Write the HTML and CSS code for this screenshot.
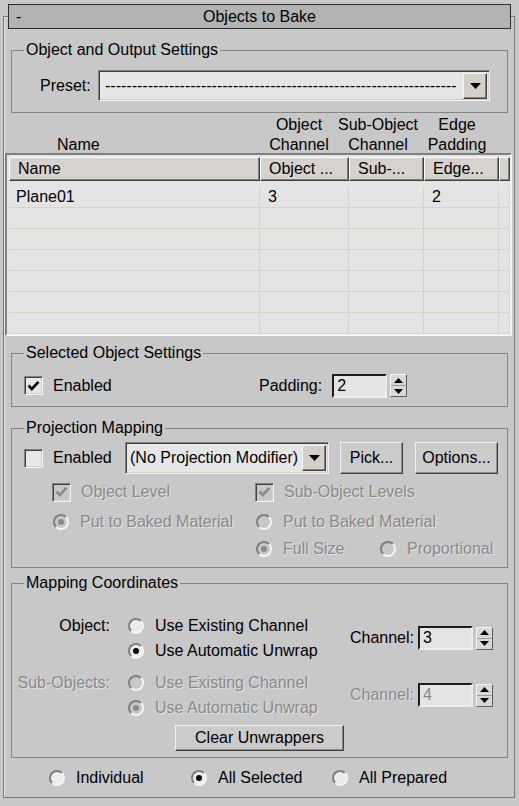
FILE: index.html
```html
<!DOCTYPE html>
<html>
<head>
<meta charset="utf-8">
<link rel="stylesheet" href="styles.css">
</head>
<body>
<div class="rollout">
  <div class="title"><span class="minus">-</span><span class="title-text">Objects to Bake</span><span></span></div>

  <fieldset class="group g1">
    <legend>Object and Output Settings</legend>
    <div class="preset-row">
      <span class="preset-label">Preset:</span>
      <div class="combo preset-combo">
        <span class="val">------------------------------------------------------------------</span>
        <span class="arrow"><svg width="11" height="6" viewBox="0 0 11 6"><path d="M0 0H11L5.5 6Z" fill="#000"/></svg></span>
      </div>
    </div>
  </fieldset>

  <div class="col-labels">
    <div class="cl cl-name"><br>Name</div>
    <div class="cl">Object<br>Channel</div>
    <div class="cl">Sub-Object<br>Channel</div>
    <div class="cl">Edge<br>Padding</div>
  </div>

  <div class="list">
    <div class="list-head">
      <div class="hcell">Name</div>
      <div class="hcell">Object ...</div>
      <div class="hcell">Sub-...</div>
      <div class="hcell">Edge...</div>
      <div class="hcell"></div>
    </div>
    <div class="list-body">
      <div class="lrow"><div class="cell">Plane01</div><div class="cell">3</div><div class="cell"></div><div class="cell">2</div><div class="cell"></div></div>
      <div class="lrow"><div class="cell"></div><div class="cell"></div><div class="cell"></div><div class="cell"></div><div class="cell"></div></div>
      <div class="lrow"><div class="cell"></div><div class="cell"></div><div class="cell"></div><div class="cell"></div><div class="cell"></div></div>
      <div class="lrow"><div class="cell"></div><div class="cell"></div><div class="cell"></div><div class="cell"></div><div class="cell"></div></div>
      <div class="lrow"><div class="cell"></div><div class="cell"></div><div class="cell"></div><div class="cell"></div><div class="cell"></div></div>
      <div class="lrow"><div class="cell"></div><div class="cell"></div><div class="cell"></div><div class="cell"></div><div class="cell"></div></div>
      <div class="lrow"><div class="cell"></div><div class="cell"></div><div class="cell"></div><div class="cell"></div><div class="cell"></div></div>
    </div>
  </div>

  <fieldset class="group g2">
    <legend>Selected Object Settings</legend>
    <div class="sel-row">
      <div class="opt sel-enabled"><span class="check on"><svg width="13" height="12" viewBox="0 0 13 12"><path d="M1.5 5.5L4.8 9L11.5 1.8" fill="none" stroke="#000" stroke-width="2.6"/></svg></span>Enabled</div>
      <span class="lbl">Padding:</span>
      <div class="spin">
        <span class="field">2</span>
        <span class="arrows"><svg width="9" height="5" viewBox="0 0 9 5"><path d="M0 5H9L4.5 0Z" fill="#000"/></svg><span class="sep"></span><svg width="9" height="5" viewBox="0 0 9 5"><path d="M0 0H9L4.5 5Z" fill="#000"/></svg></span>
      </div>
    </div>
  </fieldset>

  <fieldset class="group g3">
    <legend>Projection Mapping</legend>
    <div class="proj-row1">
      <div class="opt proj-enabled"><span class="check"></span>Enabled</div>
      <div class="combo proj-combo">
        <span class="val">(No Projection Modifier)</span>
        <span class="arrow"><svg width="11" height="6" viewBox="0 0 11 6"><path d="M0 0H11L5.5 6Z" fill="#000"/></svg></span>
      </div>
      <span class="btn pick">Pick...</span>
      <span class="btn options">Options...</span>
    </div>
    <div class="proj-row row2">
      <div class="opt dis col-left"><span class="check on dis"><svg width="13" height="12" viewBox="0 0 13 12"><path d="M1.5 5.5L4.8 9L11.5 1.8" fill="none" stroke="#8a8a8a" stroke-width="2.6"/></svg></span>Object Level</div>
      <div class="opt dis"><span class="check on dis"><svg width="13" height="12" viewBox="0 0 13 12"><path d="M1.5 5.5L4.8 9L11.5 1.8" fill="none" stroke="#8a8a8a" stroke-width="2.6"/></svg></span>Sub-Object Levels</div>
    </div>
    <div class="proj-row row3">
      <div class="opt dis col-left"><span class="radio on dis"></span>Put to Baked Material</div>
      <div class="opt dis"><span class="radio dis"></span>Put to Baked Material</div>
    </div>
    <div class="proj-row row4">
      <div class="opt dis col-fullsize"><span class="radio on dis"></span>Full Size</div>
      <div class="opt dis"><span class="radio dis"></span>Proportional</div>
    </div>
  </fieldset>

  <fieldset class="group g4">
    <legend>Mapping Coordinates</legend>
    <div class="map-block obj-block">
      <span class="map-label">Object:</span>
      <div class="map-radios">
        <div class="opt mrow"><span class="radio"></span>Use Existing Channel</div>
        <div class="opt mrow"><span class="radio on"></span>Use Automatic Unwrap</div>
      </div>
      <div class="chan">
        <span class="lbl">Channel:</span>
        <div class="spin">
          <span class="field">3</span>
          <span class="arrows"><svg width="9" height="5" viewBox="0 0 9 5"><path d="M0 5H9L4.5 0Z" fill="#000"/></svg><span class="sep"></span><svg width="9" height="5" viewBox="0 0 9 5"><path d="M0 0H9L4.5 5Z" fill="#000"/></svg></span>
        </div>
      </div>
    </div>
    <div class="map-block sub-block">
      <span class="map-label dis">Sub-Objects:</span>
      <div class="map-radios">
        <div class="opt mrow dis"><span class="radio dis"></span>Use Existing Channel</div>
        <div class="opt mrow dis"><span class="radio on dis"></span>Use Automatic Unwrap</div>
      </div>
      <div class="chan">
        <span class="lbl dis">Channel:</span>
        <div class="spin">
          <span class="field dis">4</span>
          <span class="arrows"><svg width="9" height="5" viewBox="0 0 9 5"><path d="M0 5H9L4.5 0Z" fill="#000"/></svg><span class="sep"></span><svg width="9" height="5" viewBox="0 0 9 5"><path d="M0 0H9L4.5 5Z" fill="#000"/></svg></span>
        </div>
      </div>
    </div>
    <div class="clear-row"><span class="btn clear">Clear Unwrappers</span></div>
  </fieldset>

  <div class="bottom-row">
    <div class="opt b1"><span class="radio"></span>Individual</div>
    <div class="opt b2"><span class="radio on"></span>All Selected</div>
    <div class="opt b3"><span class="radio"></span>All Prepared</div>
  </div>
</div>
</body>
</html>
```
FILE: styles.css
```css
* { box-sizing: border-box; }
html, body { margin: 0; padding: 0; }
body {
  background: #c8c8c8;
  font-family: "Liberation Sans", Arial, sans-serif;
  font-size: 16px;
  color: #000;
  width: 519px;
  height: 806px;
  overflow: hidden;
}

.rollout {
  margin: 16px 0 0 3px;
  width: 512px;
  height: 782px;
  border: 1px solid #7a7a7a;
  box-shadow: inset 1px 1px 0 #e4e4e4;
}

.title {
  margin: -13px 0 0 4px;
  width: 503px;
  height: 25px;
  border: 1px solid #2c2c2c;
  background: #b3b3b3;
  display: grid;
  grid-template-columns: 1fr auto 1fr;
  align-items: center;
  line-height: 18px;
}
.title .minus { padding-left: 7px; }

/* group boxes */
.group {
  margin: 12px 0 0 7px;
  width: 497px;
  border: 1px solid #858585;
  padding: 0;
  min-width: 0;
}
.g2 { margin-top: 8px; }
.g4 { margin-top: 6px; }
.group legend {
  margin-left: 12px;
  padding: 0 2px;
  line-height: 18px;
}
.dis { color: #8a8a8a; text-shadow: 1px 1px 0 #e2e2e2; }

/* preset */
.preset-row {
  display: flex;
  align-items: center;
  margin: 11px 0 11px 28px;
}
.preset-label { width: 58px; }
.combo {
  display: flex;
  align-items: center;
  height: 31px;
  border: 1px solid;
  border-color: #808080 #f2f2f2 #f2f2f2 #808080;
  box-shadow: inset 1px 1px 0 #404040, inset -1px -1px 0 #d4d0c8;
  background: #e6e6e6;
  padding: 0 2px 0 6px;
}
.combo .val { flex: 1; white-space: nowrap; }
.combo .arrow {
  width: 24px;
  height: 26px;
  background: #d4d0c8;
  border: 1px solid;
  border-color: #f4f4f4 #404040 #404040 #f4f4f4;
  box-shadow: inset -1px -1px 0 #808080;
  display: flex;
  align-items: center;
  justify-content: center;
  flex: none;
}
.preset-combo { width: 392px; }

/* column labels */
.col-labels {
  display: grid;
  grid-template-columns: 256px 72px 86px 72px;
  margin: 2px 0 0 3px;
  line-height: 20px;
  height: 38px;
  text-align: center;
}
.cl-name { text-align: left; padding-left: 50px; }

/* list */
.list {
  margin-left: 1px;
  width: 507px;
  height: 183px;
  border: 2px solid;
  border-color: #808080 #f4f4f4 #f4f4f4 #808080;
  background: #e4e4e4;
}
.list-head, .lrow {
  display: grid;
  grid-template-columns: 251px 89px 75px 75px 1fr;
  padding-left: 2px;
}
.list-head { padding-top: 2px; height: 32px; }
.hcell {
  height: 24px;
  background: #d6d3ce;
  border: 1px solid;
  border-color: #ffffff #404040 #404040 #ffffff;
  box-shadow: inset -1px -1px 0 #808080;
  padding-left: 8px;
  line-height: 21px;
  white-space: nowrap;
  overflow: hidden;
}
.lrow { height: 21px; }
.cell {
  border-right: 1px solid #d9d2c9;
  border-bottom: 1px solid #d9d2c9;
  padding-left: 8px;
  line-height: 20px;
}
.lrow .cell:first-child { padding-left: 7px; }

/* options */
.opt { display: flex; align-items: center; white-space: nowrap; }
.check {
  width: 19px;
  height: 19px;
  flex: none;
  margin-right: 10px;
  border: 1px solid;
  border-color: #808080 #f4f4f4 #f4f4f4 #808080;
  box-shadow: inset 1px 1px 0 #404040, inset -1px -1px 0 #d4d0c8;
  background: #e8e8e8;
  display: flex;
  align-items: center;
  justify-content: center;
}
.check.dis { background: #c8c8c8; }
.radio {
  width: 16px;
  height: 16px;
  flex: none;
  margin: 0 11px 0 1px;
  border-radius: 50%;
  border: 2px solid;
  border-color: #808080 #f4f4f4 #f4f4f4 #808080;
  background: #ececec;
  display: flex;
  align-items: center;
  justify-content: center;
}
.radio.on::after {
  content: "";
  width: 6px;
  height: 6px;
  border-radius: 50%;
  background: #000;
}
.radio.dis { background: #c8c8c8; }
.radio.dis.on::after { background: #8a8a8a; }

/* spinner */
.spin { display: flex; align-items: center; gap: 3px; }
.spin .field {
  width: 55px;
  height: 24px;
  border: 2px solid;
  border-color: #1c1c1c #ececec #ececec #1c1c1c;
  background: #e4e4e4;
  padding-left: 3px;
  line-height: 20px;
}
.spin .arrows {
  width: 17px;
  height: 23px;
  border: 1px solid;
  border-color: #f4f4f4 #606060 #606060 #f4f4f4;
  background: #d8d8d8;
  display: flex;
  flex-direction: column;
  align-items: center;
  justify-content: space-evenly;
}
.spin .arrows .sep { width: 100%; height: 1px; background: #9a9a9a; }

/* group 2 */
.sel-row {
  display: flex;
  align-items: center;
  height: 23px;
  margin: 12px 0 9px 12px;
}
.sel-enabled { width: 235px; }
.lbl { margin-right: 10px; }

/* group 3 */
.proj-row1 {
  display: flex;
  align-items: center;
  height: 32px;
  margin: 5px 0 0 12px;
}
.proj-enabled { width: 101px; }
.proj-combo { width: 204px; height: 32px; padding-left: 4px; }
.btn {
  display: flex;
  align-items: center;
  justify-content: center;
  height: 32px;
  border: 1px solid;
  border-color: #f0f0f0 #404040 #404040 #f0f0f0;
  box-shadow: inset -1px -1px 0 #8a8a8a;
  background: #cbcbcb;
}
.pick { width: 63px; margin-left: 11px; }
.options { width: 83px; margin-left: 12px; }
.proj-row { display: flex; align-items: center; height: 20px; margin-left: 40px; }
.row2 { margin-top: 8px; }
.row3 { margin-top: 10px; }
.row4 { margin-top: 7px; margin-bottom: 8px; margin-left: 243px; }
.col-left { width: 203px; }
.col-fullsize { width: 124px; }

/* group 4 */
.map-block {
  display: flex;
  align-items: center;
  margin-right: 14px;
}
.obj-block { margin-top: 21px; }
.sub-block { margin-top: 7px; }
.map-label { width: 98px; text-align: right; align-self: flex-start; line-height: 25px; }
.map-radios { margin-left: 17px; }
.mrow { height: 25px; }
.chan { margin-left: auto; display: flex; align-items: center; }
.chan .lbl { margin-right: 4px; }
.clear-row { display: flex; justify-content: center; margin: 5px 0 6px; }
.clear { width: 169px; height: 26px; }

/* bottom radios */
.bottom-row {
  display: flex;
  align-items: center;
  height: 20px;
  margin: 10px 0 0 44px;
}
.b1 { width: 142px; }
.b2 { width: 141px; }
```
